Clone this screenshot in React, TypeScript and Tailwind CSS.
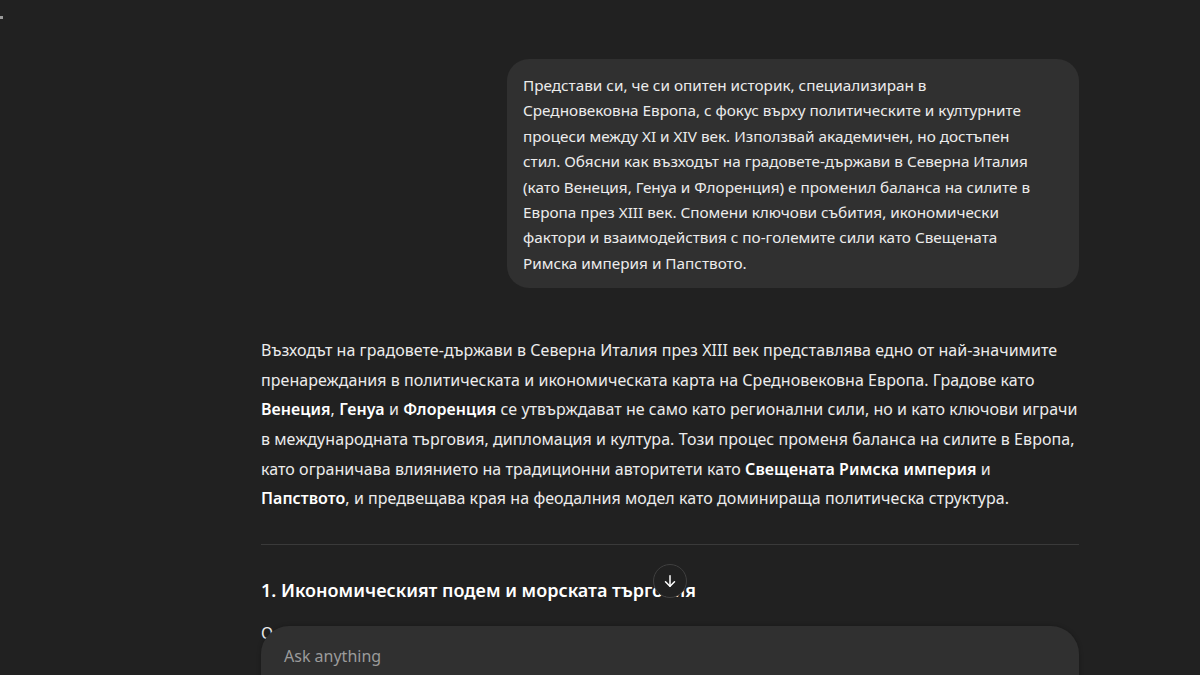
import React from "react";

const font = { fontFamily: '"Noto Sans", "Open Sans", sans-serif' };

export default function App() {
  const userLines = [
    "Представи си, че си опитен историк, специализиран в",
    "Средновековна Европа, с фокус върху политическите и културните",
    "процеси между XI и XIV век. Използвай академичен, но достъпен",
    "стил. Обясни как възходът на градовете-държави в Северна Италия",
    "(като Венеция, Генуа и Флоренция) е променил баланса на силите в",
    "Европа през XIII век. Спомени ключови събития, икономически",
    "фактори и взаимодействия с по-големите сили като Свещената",
    "Римска империя и Папството.",
  ];
  return (
    <div className="relative h-[675px] w-[1200px] overflow-hidden bg-[#212121] text-[#ececec]" style={font}>
      <div className="absolute left-0 top-[16px] h-[3px] w-[3px] bg-[#9a9a9a]" />
      <div className="ml-[261px] flex w-[818px] flex-col pt-[59px]">
        <div className="flex justify-end">
          <div className="w-[572px] rounded-[22px] bg-[#303030] px-[16px] pb-[12px] pt-[14px] text-[15.3px] leading-[25.4px]">
            {userLines.map((l, i) => (
              <div key={i} className="whitespace-nowrap">{l}</div>
            ))}
          </div>
        </div>
        <div className="mt-[48px] text-[16px] leading-[29.6px] tracking-[0.05px]">
          <div className="whitespace-nowrap">Възходът на градовете-държави в Северна Италия през XIII век представлява едно от най-значимите</div>
          <div className="whitespace-nowrap">пренареждания в политическата и икономическата карта на Средновековна Европа. Градове като</div>
          <div className="whitespace-nowrap"><b className="font-semibold text-white">Венеция</b>, <b className="font-semibold text-white">Генуа</b> и <b className="font-semibold text-white">Флоренция</b> се утвърждават не само като регионални сили, но и като ключови играчи</div>
          <div className="whitespace-nowrap">в международната търговия, дипломация и култура. Този процес променя баланса на силите в Европа,</div>
          <div className="whitespace-nowrap">като ограничава влиянието на традиционни авторитети като <b className="font-semibold text-white">Свещената Римска империя</b> и</div>
          <div className="whitespace-nowrap"><b className="font-semibold text-white">Папството</b>, и предвещава края на феодалния модел като доминираща политическа структура.</div>
        </div>
        <div className="mt-[30px] h-px w-full bg-[#3a3a3a]" />
        <h2 className="mt-[31px] text-[18px] font-semibold leading-[28px] text-white">1. Икономическият подем и морската търговия</h2>
        <p className="mt-[15px] text-[16px] leading-[28px]">Основите на икономическото</p>
      </div>
      <button className="absolute left-[653px] top-[564px] flex h-[34px] w-[34px] items-center justify-center rounded-full border border-[#3f3f3f] bg-[#212121] text-white">
        <svg width="18" height="18" viewBox="0 0 24 24" fill="none" stroke="currentColor" strokeWidth="2" strokeLinecap="round" strokeLinejoin="round">
          <path d="M12 5v14" />
          <path d="M6 13l6 6 6-6" />
        </svg>
      </button>
      <div className="absolute left-[261px] top-[626px] h-[120px] w-[818px] rounded-[28px] bg-[#303030] shadow-[0_0_4px_rgba(0,0,0,0.25)]">
        <div className="px-[23px] pt-[18px] text-[16px] leading-[24px] text-[#9b9b9b]">Ask anything</div>
      </div>
    </div>
  );
}
